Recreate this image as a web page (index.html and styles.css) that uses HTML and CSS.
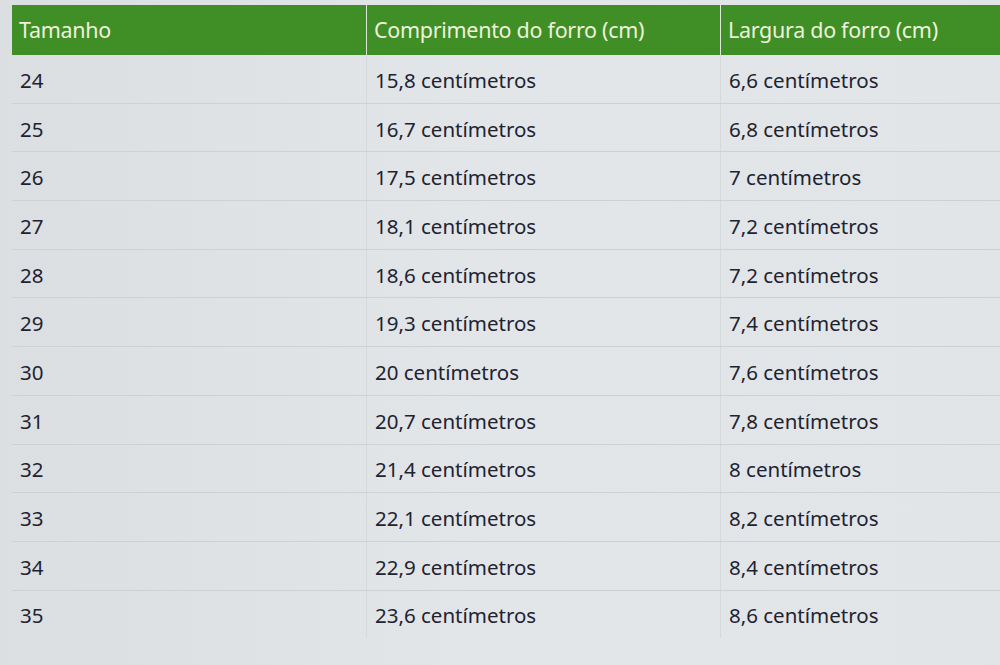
FILE: index.html
```html
<!DOCTYPE html>
<html lang="pt">
<head>
<meta charset="utf-8">
<link rel="stylesheet" href="styles.css">
</head>
<body>
<div class="page">
  <table class="sizes">
    <thead>
      <tr>
        <th class="c1">Tamanho</th>
        <th class="c2">Comprimento do forro (cm)</th>
        <th class="c3">Largura do forro (cm)</th>
      </tr>
    </thead>
    <tbody>
      <tr><td>24</td><td>15,8 centímetros</td><td>6,6 centímetros</td></tr>
      <tr><td>25</td><td>16,7 centímetros</td><td>6,8 centímetros</td></tr>
      <tr><td>26</td><td>17,5 centímetros</td><td>7 centímetros</td></tr>
      <tr><td>27</td><td>18,1 centímetros</td><td>7,2 centímetros</td></tr>
      <tr><td>28</td><td>18,6 centímetros</td><td>7,2 centímetros</td></tr>
      <tr><td>29</td><td>19,3 centímetros</td><td>7,4 centímetros</td></tr>
      <tr><td>30</td><td>20 centímetros</td><td>7,6 centímetros</td></tr>
      <tr><td>31</td><td>20,7 centímetros</td><td>7,8 centímetros</td></tr>
      <tr><td>32</td><td>21,4 centímetros</td><td>8 centímetros</td></tr>
      <tr><td>33</td><td>22,1 centímetros</td><td>8,2 centímetros</td></tr>
      <tr><td>34</td><td>22,9 centímetros</td><td>8,4 centímetros</td></tr>
      <tr><td>35</td><td>23,6 centímetros</td><td>8,6 centímetros</td></tr>
    </tbody>
  </table>
</div>
</body>
</html>
```

FILE: styles.css
```css
html, body {
  margin: 0;
  padding: 0;
  background: #e1e4e7;
}
.page {
  width: 1000px;
  height: 665px;
  overflow: hidden;
  padding: 5px 0 0 12px;
  box-sizing: border-box;
  background: linear-gradient(90deg, #dcdfe2 0%, #e3e6e8 50%, #e1e5e8 100%);
  font-family: "Noto Sans", "Open Sans", sans-serif;
  font-size: 20.5px;
  line-height: 24px;
  color: #1d2331;
}
.sizes {
  border-collapse: collapse;
  width: 1000px;
  table-layout: fixed;
}
.sizes th {
  background: #3f8e26;
  color: #eef2dc;
  font-weight: 400;
  font-size: 21.5px;
  letter-spacing: -0.3px;
  text-align: left;
  height: 50px;
  padding: 0 7px;
  border-left: 1px solid #dfe8d8;
  vertical-align: middle;
}
.sizes th.c1 { border-left: none; width: 340px; }
.sizes th.c2 { width: 339px; }
.sizes td {
  height: 45.7px;
  padding: 2px 0 0 8px;
  border-bottom: 1px solid #cdd1d4;
  border-left: 1px solid #d6d9dc;
  vertical-align: middle;
}
.sizes td:first-child {
  border-left: none;
}
.sizes tr:last-child td {
  border-bottom: none;
}
```
